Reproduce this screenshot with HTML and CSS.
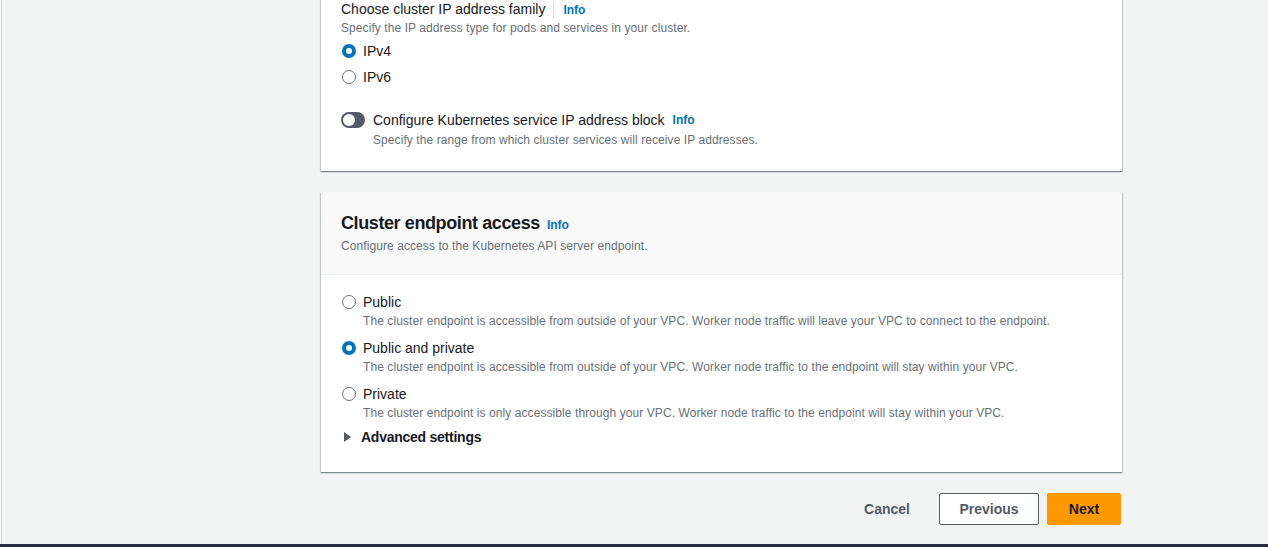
FILE: index.html
```html
<!DOCTYPE html>
<html lang="en">
<head>
<meta charset="utf-8">
<title>Cluster networking</title>
<link rel="stylesheet" href="styles.css">
</head>
<body>
<div class="frame">
  <main class="main">
    <section class="card card-first">
      <div class="field">
        <div class="label-row">
          <span class="label">Choose cluster IP address family</span>
          <a class="info divided">Info</a>
        </div>
        <div class="desc">Specify the IP address type for pods and services in your cluster.</div>
        <div class="radio-group">
          <label class="radio"><span class="dot checked"></span><span class="radio-label">IPv4</span></label>
          <label class="radio"><span class="dot"></span><span class="radio-label">IPv6</span></label>
        </div>
      </div>
      <div class="toggle-field">
        <div class="toggle-row">
          <span class="toggle"><span class="knob"></span></span>
          <span class="label">Configure Kubernetes service IP address block</span>
          <a class="info">Info</a>
        </div>
        <div class="desc toggle-desc">Specify the range from which cluster services will receive IP addresses.</div>
      </div>
    </section>

    <section class="card card-second">
      <header class="card-header">
        <div class="title-row">
          <h2 class="title">Cluster endpoint access</h2>
          <a class="info">Info</a>
        </div>
        <div class="desc">Configure access to the Kubernetes API server endpoint.</div>
      </header>
      <div class="card-body">
        <div class="option">
          <label class="radio"><span class="dot"></span><span class="radio-label">Public</span></label>
          <div class="desc option-desc">The cluster endpoint is accessible from outside of your VPC. Worker node traffic will leave your VPC to connect to the endpoint.</div>
        </div>
        <div class="option">
          <label class="radio"><span class="dot checked"></span><span class="radio-label">Public and private</span></label>
          <div class="desc option-desc">The cluster endpoint is accessible from outside of your VPC. Worker node traffic to the endpoint will stay within your VPC.</div>
        </div>
        <div class="option">
          <label class="radio"><span class="dot"></span><span class="radio-label">Private</span></label>
          <div class="desc option-desc">The cluster endpoint is only accessible through your VPC. Worker node traffic to the endpoint will stay within your VPC.</div>
        </div>
        <div class="expander">
          <span class="caret"></span>
          <span class="expander-label">Advanced settings</span>
        </div>
      </div>
    </section>

    <div class="actions">
      <button class="btn btn-link">Cancel</button>
      <button class="btn btn-normal">Previous</button>
      <button class="btn btn-primary">Next</button>
    </div>
  </main>
</div>
<div class="footer-bar"></div>
</body>
</html>
```

FILE: styles.css
```css
html, body {
  margin: 0;
  padding: 0;
  height: 547px;
  overflow: hidden;
}
body {
  background: #f2f3f3;
  font-family: "Liberation Sans", Arial, sans-serif;
  color: #16191f;
  display: flex;
  flex-direction: column;
}
.frame {
  flex: 1;
  margin-left: 1px;
  border-left: 1px solid #d5dbdb;
  overflow: hidden;
}
.main {
  margin-left: 319px;
  width: 801px;
  display: flex;
  flex-direction: column;
}
.card {
  background: #fff;
  box-shadow: 0 1px 1px 0 rgba(0, 28, 36, 0.3), 1px 1px 1px 0 rgba(0, 28, 36, 0.15), -1px 1px 1px 0 rgba(0, 28, 36, 0.15);
}
.card-first {
  margin-top: -21px;
  padding: 20px 20px 23px;
}
.label-row, .toggle-row, .title-row {
  display: flex;
  align-items: center;
}
.label {
  font-size: 14px;
  line-height: 22px;
  color: #16191f;
}
.label-row .label {
  line-height: 21px;
}
.info {
  font-size: 12px;
  font-weight: bold;
  color: #0073bb;
  line-height: 16px;
  margin-left: 8px;
}
.info.divided {
  margin-left: 8px;
  padding-left: 9px;
  border-left: 1px solid #d5dbdb;
}
.desc {
  font-size: 12px;
  line-height: 16px;
  color: #687078;
  letter-spacing: 0.08px;
}
.radio-group {
  margin-top: 4px;
  display: flex;
  flex-direction: column;
  gap: 4px;
}
.radio {
  display: flex;
  align-items: center;
  height: 22px;
}
.dot {
  box-sizing: border-box;
  width: 14px;
  height: 14px;
  border-radius: 50%;
  border: 1.3px solid #687078;
  background: #fff;
  margin-left: 1px;
  margin-right: 7px;
  flex: none;
}
.dot.checked {
  border: 4.5px solid #0073bb;
}
.radio-label {
  font-size: 14px;
  line-height: 22px;
}
.toggle-field {
  margin-top: 21px;
}
.toggle {
  box-sizing: border-box;
  width: 24px;
  height: 16px;
  border-radius: 8px;
  background: #545b64;
  display: flex;
  align-items: center;
  padding-left: 2px;
  margin-right: 8px;
  flex: none;
}
.knob {
  width: 12px;
  height: 12px;
  border-radius: 50%;
  background: #fff;
}
.toggle-desc {
  margin-top: 1px;
  padding-left: 32px;
}
.card-second {
  margin-top: 21px;
}
.card-header {
  background: #fafafa;
  padding: 20px 20px 20px;
  border-bottom: 1px solid #eaeded;
}
.title {
  margin: 0;
  font-size: 18px;
  line-height: 22px;
  font-weight: bold;
  color: #16191f;
  letter-spacing: -0.4px;
}
.title-row .info {
  margin-left: 7px;
  margin-top: 3px;
}
.card-header .desc {
  margin-top: 4px;
}
.card-body {
  padding: 16px 20px 24px;
  display: flex;
  flex-direction: column;
  gap: 8px;
}
.option-desc {
  padding-left: 22px;
}
.expander {
  display: flex;
  align-items: center;
  height: 22px;
  margin-top: -3px;
}
.caret {
  width: 0;
  height: 0;
  border-top: 5px solid transparent;
  border-bottom: 5px solid transparent;
  border-left: 7px solid #545b64;
  margin-left: 3px;
  margin-right: 10px;
}
.expander-label {
  font-size: 14px;
  font-weight: bold;
  color: #16191f;
  letter-spacing: -0.25px;
}
.actions {
  margin-top: 21px;
  display: flex;
  justify-content: flex-end;
  align-items: center;
  gap: 8px;
  padding-right: 1px;
}
.btn {
  font-family: "Liberation Sans", Arial, sans-serif;
  font-size: 14px;
  font-weight: bold;
  height: 32px;
  border-radius: 2px;
  cursor: pointer;
}
.btn-link {
  background: transparent;
  border: none;
  color: #545b64;
  padding: 0 20px;
  margin-right: 1px;
}
.btn-normal {
  background: #fff;
  border: 1px solid #545b64;
  color: #545b64;
  width: 100px;
}
.btn-primary {
  background: #ff9900;
  border: 1px solid #ff9900;
  color: #16191f;
  width: 74px;
}
.footer-bar {
  height: 3px;
  background: #232f3e;
  flex: none;
}
```
